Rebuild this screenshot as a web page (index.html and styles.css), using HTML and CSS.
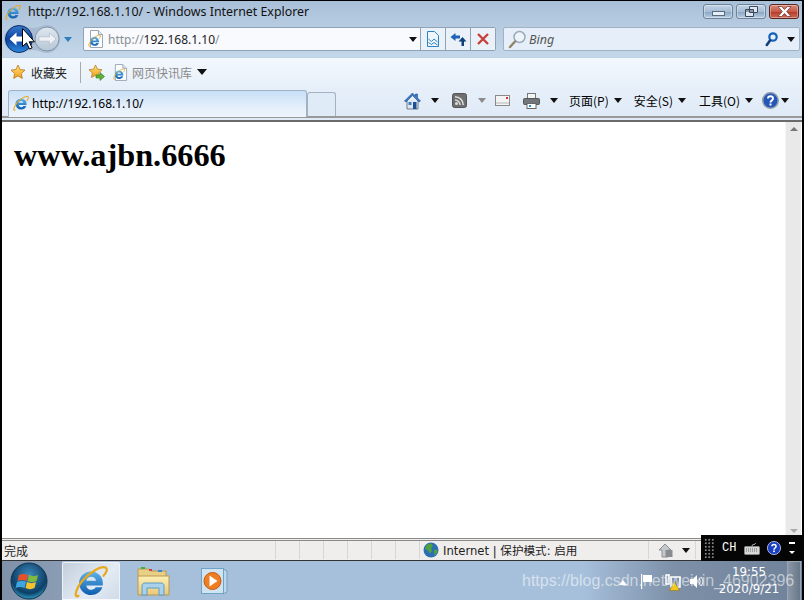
FILE: index.html
```html
<!DOCTYPE html>
<html lang="zh">
<head>
<meta charset="utf-8">
<title>http://192.168.1.10/ - Windows Internet Explorer</title>
<link rel="stylesheet" href="styles.css">
</head>
<body>
<svg class="defs" aria-hidden="true">
  <defs>
    <linearGradient id="gblue" x1="0" y1="0" x2="0" y2="1"><stop offset="0" stop-color="#5fb4ea"/><stop offset="1" stop-color="#0f5cae"/></linearGradient>
    <linearGradient id="ggold" x1="0" y1="0" x2="0" y2="1"><stop offset="0" stop-color="#ffe27a"/><stop offset="1" stop-color="#ef9d1a"/></linearGradient>
    <linearGradient id="gback" x1="0" y1="0" x2="0" y2="1"><stop offset="0" stop-color="#3a7ccc"/><stop offset=".5" stop-color="#0c3f9c"/><stop offset="1" stop-color="#2d8be0"/></linearGradient>
    <linearGradient id="gfwd" x1="0" y1="0" x2="0" y2="1"><stop offset="0" stop-color="#dfe7ef"/><stop offset="1" stop-color="#b7c6d6"/></linearGradient>
    <linearGradient id="gfolder" x1="0" y1="0" x2="0" y2="1"><stop offset="0" stop-color="#fdf0b4"/><stop offset="1" stop-color="#e8c878"/></linearGradient>
    <radialGradient id="gorb" cx=".5" cy=".35" r=".7"><stop offset="0" stop-color="#3f8cc0"/><stop offset=".7" stop-color="#0d3f66"/><stop offset="1" stop-color="#39b6dc"/></radialGradient>
    <symbol id="ie" viewBox="1 0 22 23">
      <path fill="url(#gblue)" fill-rule="evenodd" d="M4 13a8 8 0 0 1 16 0v1.500H8.800c.3 1.900 1.700 3 3.400 3 1.400 0 2.500-.6 3-1.700h4.500C18.600 19 15.700 21 12.200 21A8.100 8.100 0 0 1 4 13zM8.800 11.300h6.600c-.3-1.600-1.600-2.600-3.300-2.600s-3 1-3.300 2.600z"/>
      <path fill="none" stroke="#e8a91c" stroke-width="1.500" stroke-linecap="round" d="M3.500 21.500C.5 23.500 1 18 6 11.500 11 5.500 19 1 22 2.500c1.700 1-.2 4-1.500 5.500"/>
    </symbol>
    <symbol id="star" viewBox="0 0 16 16">
      <path fill="url(#ggold)" stroke="#b9791a" stroke-width=".8" d="M8 1l2.100 4.500 4.900.6-3.600 3.400.9 4.900L8 11.900l-4.300 2.500.9-4.900L1 6.100l4.900-.6z"/>
    </symbol>
    <symbol id="page" viewBox="0 0 16 18">
      <path fill="#fbfdff" stroke="#9aa7b5" d="M2.500.5h8l4 4v13h-12z"/>
      <path fill="#dfe6ee" stroke="#9aa7b5" d="M10.500.5v4h4"/>
      <use href="#ie" x="0" y="4" width="13" height="13"/>
    </symbol>
  </defs>
</svg>

<div class="window">
  <header class="titlebar">
    <svg class="ico-16"><use href="#ie"/></svg>
    <span class="title-text">http://192.168.1.10/ - Windows Internet Explorer</span>
    <div class="winbtns">
      <button class="winbtn"><span class="min-glyph"></span></button>
      <button class="winbtn">
        <svg width="13" height="11" viewBox="0 0 13 11"><path fill="#dfe8f2" stroke="#3a4a5c" d="M4.500.5h8v6h-8zM.5 3.500h8v7h-8z"/><path fill="none" stroke="#3a4a5c" d="M1 5h7"/></svg>
      </button>
      <button class="winbtn winbtn-close">
        <svg width="15" height="11" viewBox="0 0 15 11"><path fill="#fff" stroke="#6b2a22" stroke-width=".7" d="M1 .5h3.600l2.900 3 2.900-3H14L9.700 5.500 14 10.500h-3.600l-2.900-3-2.900 3H1l4.300-5z"/></svg>
      </button>
    </div>
  </header>

  <nav class="navbar">
    <div class="navcluster">
      <svg class="nav-svg" width="62" height="32" viewBox="0 0 62 32">
        <path fill="#9fb4c9" opacity=".7" d="M17 2c6 0 9 3 13 3h2c4 0 8-3 13-3 7 0 13 6 13 14s-6 14-13 14c-5 0-9-3-13-3h-2c-4 0-8 3-13 3C9 30 2 24 2 16S9 2 17 2z"/>
        <circle cx="17" cy="16" r="13.500" fill="url(#gback)" stroke="#0f2f6a"/>
        <path fill="#fff" d="M7.500 16l7-6.500v4h8v5h-8v4z"/>
        <circle cx="45" cy="16" r="12" fill="url(#gfwd)" stroke="#7f93a8"/>
        <path fill="#eef2f6" stroke="#a6b4c2" stroke-width=".6" d="M54 16l-6.500-6v3.800H37v4.400h10.500V22z"/>
        <path fill="#fff" stroke="#000" d="M20.500 5.500v18l4-3.700 3 6.200 2.600-1.200-2.900-6h5.300z"/>
      </svg>
      <span class="tri tri-blue"></span>
    </div>
    <div class="addr">
      <svg class="addr-page" width="16" height="18"><use href="#page"/></svg>
      <span class="addr-text"><span class="dim">http://</span>192.168.1.10<span class="dim">/</span></span>
      <span class="tri tri-dark addr-drop"></span>
      <span class="addr-btn">
        <svg width="14" height="16" viewBox="0 0 14 16"><path fill="#eef6fc" stroke="#2a83c4" d="M1.500.5h7l4 4v11h-11z"/><path fill="none" stroke="#2a83c4" d="M2.500 8l3 2.500 2.500-2.500 3.500 3M2.500 11.500l3 2 2.500-2 3.500 2.500"/></svg>
      </span>
      <span class="addr-btn">
        <svg width="17" height="15" viewBox="0 0 17 15"><path fill="#1f63b5" d="M5.500 1v2.500H10v3H5.500V9L.5 5z"/><path fill="#123f7a" d="M11.500 14v-4.500H8.500L12.500 5l4 4.500h-2.500V14z"/></svg>
      </span>
      <span class="addr-btn">
        <svg width="12" height="12" viewBox="0 0 12 12"><path fill="none" stroke="#c6423a" stroke-width="2.400" d="M1 1l10 10M11 1L1 11"/></svg>
      </span>
    </div>
    <div class="search">
      <svg width="19" height="19" viewBox="0 0 19 19"><circle cx="11.500" cy="7" r="5.500" fill="#eef4fa" stroke="#9aa9b8" stroke-width="1.500"/><path stroke="#8e8468" stroke-width="2.400" stroke-linecap="round" d="M7 11.500L2 17"/></svg>
      <span class="search-text">Bing</span>
      <svg class="search-go" width="13" height="15" viewBox="0 0 13 15"><circle cx="8" cy="5" r="3.700" fill="none" stroke="#1560b8" stroke-width="2.200"/><path stroke="#123f7a" stroke-width="2.600" stroke-linecap="round" d="M5 8.500L1.800 13"/></svg>
      <span class="tri tri-dark search-drop"></span>
    </div>
  </nav>

  <section class="chrome">
    <div class="favbar">
      <svg class="fav-star" width="16" height="16"><use href="#star"/></svg>
      <span class="fav-label">收藏夹</span>
      <span class="fav-sep"></span>
      <svg width="17" height="17" viewBox="0 0 17 17"><use href="#star" width="15" height="15"/><path fill="#5fb33a" stroke="#2f7a1c" stroke-width=".6" d="M8 11h4V8.500l4.500 4-4.500 4V14H8z"/></svg>
      <svg class="fav-page" width="15" height="17"><use href="#page"/></svg>
      <span class="fav-gray">网页快讯库</span>
      <span class="tri tri-dark tri-lg"></span>
    </div>
    <div class="tabrow">
      <div class="tab tab-active">
        <svg class="ico-16"><use href="#ie"/></svg>
        <span class="tab-text">http://192.168.1.10/</span>
      </div>
      <div class="tab tab-new"></div>
      <div class="commands">
        <svg class="cmd-home" width="17" height="18" viewBox="0 0 17 18"><path fill="#dfe7ef" stroke="#6d7d8c" d="M3 8v9h11V8"/><rect x="9" y="10" width="3.500" height="7" fill="#1d4f99"/><rect x="4.500" y="10" width="3" height="3" fill="#3b7cc4"/><path fill="#3b78c0" stroke="#1d4f99" stroke-width=".6" d="M8.500 1L.5 9l1.500 1 6.500-6.500L15 10l1.500-1-3-3V2h-2v2z"/></svg>
        <span class="tri tri-dark cmd-arrow-a"></span>
        <svg class="cmd-rss" width="15" height="15" viewBox="0 0 15 15"><rect x=".5" y=".5" width="14" height="14" rx="2" fill="#6e6e6e" stroke="#555"/><circle cx="4.500" cy="10.500" r="1.500" fill="#ddd"/><path fill="none" stroke="#ddd" stroke-width="1.500" d="M3 7a5 5 0 0 1 5 5M3 3.700A8.300 8.300 0 0 1 11.300 12"/></svg>
        <span class="tri tri-gray cmd-arrow-b"></span>
        <svg class="cmd-mail" width="15" height="11" viewBox="0 0 15 11"><rect x=".5" y=".5" width="14" height="10" fill="#f3f3f3" stroke="#8a8a8a"/><path fill="none" stroke="#b5b5b5" d="M1 8h13"/><rect x="11" y="2" width="2" height="2" fill="#c33"/></svg>
        <svg class="cmd-print" width="17" height="16" viewBox="0 0 17 16"><rect x="4.500" y=".5" width="8" height="5" fill="#f4f4f4" stroke="#777"/><rect x=".5" y="5.500" width="16" height="6" rx="1" fill="#70767c" stroke="#555"/><rect x="4" y="10.500" width="9" height="5" fill="#fff" stroke="#666"/><rect x="6" y="12" width="2" height="2" fill="#2a8fd0"/></svg>
        <span class="tri tri-dark cmd-arrow-c"></span>
        <span class="cmd-text cmd-page">页面(P)</span><span class="tri tri-dark"></span>
        <span class="cmd-text cmd-safe">安全(S)</span><span class="tri tri-dark"></span>
        <span class="cmd-text cmd-tool">工具(O)</span><span class="tri tri-dark"></span>
        <svg class="cmd-help" width="17" height="17" viewBox="0 0 17 17"><circle cx="8.500" cy="8.500" r="7.700" fill="#2456b8" stroke="#8d99a8" stroke-width="1.500"/><path fill="none" stroke="#fff" stroke-width="1.900" d="M6 6.500c0-3 5-3 5 0 0 2-2.500 2-2.500 4"/><rect x="7.500" y="11.500" width="2" height="2" fill="#fff"/></svg>
        <span class="tri tri-dark"></span>
      </div>
    </div>
  </section>

  <main class="viewport">
    <div class="page"><h1 class="headline">www.ajbn.6666</h1></div>
    <div class="scrollbar">
      <span class="sb-up"></span>
      <span class="sb-down"></span>
    </div>
  </main>

  <footer class="statusbar">
    <span class="st-done">完成</span>
    <span class="st-cell"></span><span class="st-cell"></span><span class="st-cell"></span><span class="st-cell"></span><span class="st-cell"></span><span class="st-cell"></span>
    <span class="st-zone">
      <svg width="16" height="16" viewBox="0 0 16 16"><circle cx="8" cy="8" r="7.500" fill="#2c6fb5"/><path fill="#4fa53a" d="M4 2.500l4-1 2 2-2 3 1 2-2 3-2-3-3-2zM11 8l3-.5.500 3-3 3z"/></svg>
      <span class="st-zone-text">Internet | 保护模式: 启用</span>
    </span>
    <span class="st-zoom">
      <svg width="16" height="15" viewBox="0 0 16 15"><path fill="#c4c8cc" stroke="#8c9095" d="M1 7l6-6 6 6-3 0v7H4V7z"/><rect x="7.500" y="7" width="7" height="7" fill="#8a8d90"/></svg>
      <span class="tri tri-dark st-zoom-tri"></span>
    </span>
  </footer>

  <footer class="taskbar">
    <div class="start">
      <svg width="38" height="38" viewBox="0 0 38 38"><circle cx="19" cy="19" r="18" fill="url(#gorb)" stroke="#11334f"/><path fill="#e8502a" d="M9 13c3-1.500 6-1.500 9 0l-1.500 6c-3-1.500-6-1.500-9 0z"/><path fill="#7fbb3a" d="M19 13c3 1.500 6 1.500 9 0l-1.500 6c-3 1.500-6 1.500-9 0z"/><path fill="#3fa5e0" d="M7 20c3-1.500 6-1.500 9 0l-1.500 6c-3-1.500-6-1.500-9 0z"/><path fill="#f5c42c" d="M17 20c3 1.500 6 1.500 9 0l-1.500 6c-3 1.500-6 1.500-9 0z"/></svg>
    </div>
    <div class="task task-active"><svg width="34" height="34"><use href="#ie"/></svg></div>
    <div class="task task-folder">
      <svg width="33" height="30" viewBox="0 0 33 30"><path fill="#e8cf86" stroke="#b89a50" d="M1 3h11l2 2h15v6H1z"/><rect x="4" y="1" width="4" height="2" fill="#3db03d"/><rect x="12" y="3" width="3" height="2" fill="#d04040"/><rect x="21" y="4" width="4" height="2" fill="#3b85d0"/><path fill="url(#gfolder)" stroke="#b89a50" d="M1 10h31v19H1z"/><path fill="#a9d2ea" stroke="#5f9cc4" d="M5 29V20c0-2 1-3 3-3h16c2 0 3 1 3 3v9h-5v-7H10v7z"/></svg>
    </div>
    <div class="task task-media">
      <svg width="27" height="28" viewBox="0 0 27 28"><path fill="#bcd9ec" stroke="#6fa3c6" d="M22 2l4 2v21l-4 2z"/><rect x=".5" y="1.500" width="22" height="25" fill="#cfe3f1" stroke="#6fa3c6"/><circle cx="11.500" cy="14" r="8.500" fill="#ef7d22" stroke="#c9590e"/><path fill="#fff" d="M8.500 8.500l8 5.500-8 5.500z"/></svg>
    </div>
    <div class="tray">
      <span class="tray-up"></span>
      <svg class="tray-flag" width="13" height="15" viewBox="0 0 13 15"><path fill="#fff" d="M1 0h1.200v15H1zM3 1h9v7H3z"/></svg>
      <svg class="tray-net" width="16" height="17" viewBox="0 0 16 17"><path fill="none" stroke="#fff" stroke-width="1.500" d="M1 1h3v9H1zM6 3h9v10H6z"/><path fill="#f2c81e" stroke="#8a6a00" stroke-width=".5" d="M9.500 8l5 8.500h-10z"/></svg>
      <svg class="tray-vol" width="14" height="15" viewBox="0 0 14 15"><path fill="#fff" d="M0 5h3l4-4v13l-4-4H0z"/><path fill="none" stroke="#fff" d="M9 4.500c1.500 2 1.500 4 0 6M11 3c2.500 3 2.500 6 0 9"/></svg>
      <span class="clock"><span>19:55</span><span>2020/9/21</span></span>
      <span class="showdesk"></span>
    </div>
  </footer>

  <div class="langbar">
    <span class="lang-grip"></span>
    <span class="lang-ch">CH</span>
    <svg width="16" height="13" viewBox="0 0 16 13"><path fill="none" stroke="#bbb" d="M8 4c0-2 2-1 3-2s1-1 1-1"/><rect x=".5" y="4.500" width="15" height="8" rx="1" fill="#d8d8d8" stroke="#888"/><path stroke="#666" stroke-dasharray="1 1" d="M2 7h12M2 9h12"/></svg>
    <svg width="14" height="14" viewBox="0 0 17 17"><circle cx="8.500" cy="8.500" r="8" fill="#1a3fc0" stroke="#c6d0ea"/><path fill="none" stroke="#fff" stroke-width="1.900" d="M6 6.500c0-3 5-3 5 0 0 2-2.500 2-2.500 4"/><rect x="7.500" y="11.500" width="2" height="2" fill="#fff"/></svg>
    <span class="lang-menu"><span class="lang-dash"></span><span class="lang-tri"></span></span>
  </div>

  <div class="watermark">https://blog.csdn.net/weixin_46902396</div>
</div>
</body>
</html>
```

FILE: styles.css
```css
* { box-sizing: border-box; }
html, body { margin: 0; padding: 0; background: #000; }
body { width: 804px; height: 600px; overflow: hidden; font-family: "DejaVu Sans", "Noto Sans CJK SC", sans-serif; font-size: 11px; color: #000; }
.defs { position: absolute; width: 0; height: 0; }
.ico-16 { width: 16px; height: 16px; flex: none; }
button { padding: 0; font: inherit; }

.window { position: relative; width: 804px; height: 600px; display: flex; flex-direction: column; padding: 1px 2px 0 2px; }

.titlebar { height: 24px; flex: none; display: flex; align-items: center; padding: 0 3px 3px 3px; background: linear-gradient(#a9c0d9, #b6cbe0); }
.title-text { margin-left: 7px; font-family: "Noto Sans", "Noto Sans CJK SC", sans-serif; font-size: 12.4px; color: #111; white-space: nowrap; }
.winbtns { margin-left: auto; display: flex; gap: 3px; }
.winbtn { width: 30px; height: 15px; display: flex; align-items: center; justify-content: center; border: 1px solid #6f8298; border-radius: 3px; background: linear-gradient(#c3d4e6 0, #a7bdd5 50%, #8ba7c4 55%, #b9cde1 100%); box-shadow: inset 0 0 0 1px rgba(255,255,255,.35); }
.min-glyph { display: block; width: 13px; height: 5px; background: #e8eef5; border: 1px solid #5a6c80; margin-top: 3px; }
.winbtn-close { border-color: #5a2620; background: linear-gradient(#d98a7c 0, #c65a48 50%, #b63c2a 55%, #cf6a55 100%); }

.navbar { height: 33px; flex: none; display: flex; align-items: center; padding: 0 2px 4px 0; background: linear-gradient(#b6cbe0, #c4d7ea); border-bottom: 1px solid #bccfe3; }
.navcluster { display: flex; align-items: center; width: 81px; flex: none; }
.nav-svg { flex: none; }
.navcluster .tri-blue { margin-left: 0; }
.addr { width: 413px; height: 24px; flex: none; display: flex; align-items: center; background: #f8fafd; border: 1px solid #8fa3b8; border-radius: 2px; padding-left: 4px; }
.addr-page { flex: none; }
.addr-text { margin-left: 4px; font-family: "Noto Sans", sans-serif; font-size: 12px; white-space: nowrap; color: #222; }
.dim { color: #8a8f96; }
.addr-drop { margin-left: auto; margin-right: 3px; }
.addr-btn { width: 25px; height: 100%; flex: none; display: flex; align-items: center; justify-content: center; border-left: 1px solid #8fa3b8; background: #eaf1f9; }
.search { width: 297px; height: 24px; flex: none; margin-left: 7px; display: flex; align-items: center; padding-left: 4px; background: #e6eff9; border: 1px solid #9fb2c6; border-radius: 2px; }
.search-text { margin-left: 2px; font-family: "Noto Sans", sans-serif; font-style: italic; font-size: 12.5px; color: #555; }
.search-go { margin-left: auto; }
.search-drop { margin: 0 4px 0 9px; }

.tri { display: inline-block; width: 0; height: 0; flex: none; border-style: solid; border-width: 5px 4.5px 0; border-color: #111 transparent transparent; }
.tri-blue { border-top-color: #2f7fc0; }
.tri-gray { border-top-color: #8c8c8c; }
.tri-lg { border-width: 6px 5px 0; }

.chrome { flex: none; padding-bottom: 2px; background: linear-gradient(#f3f8fd 0, #e6eff9 50%, #dfeaf7 100%); }
.favbar { height: 31px; display: flex; align-items: center; padding: 0 0 3px 8px; }
.fav-label { margin-left: 5px; font-size: 12px; color: #222; font-family: "Noto Sans CJK SC", sans-serif; }
.fav-sep { width: 1px; height: 21px; background: #a9a9a9; margin: 0 7px 0 13px; }
.fav-page { margin-left: 8px; }
.fav-gray { margin-left: 4px; font-size: 12px; color: #8a8a8a; font-family: "Noto Sans CJK SC", sans-serif; }
.favbar .tri-lg { margin-left: 5px; }

.tabrow { height: 29px; display: flex; align-items: flex-end; padding-left: 6px; border-bottom: 2px solid #999; }
.tab { border: 1px solid #a3b2c3; border-bottom: none; border-radius: 3px 3px 0 0; }
.tab-active { width: 299px; height: 27px; margin-bottom: -1px; display: flex; align-items: center; padding: 0 0 2px 4px; background: linear-gradient(#c7dff7, #e4effb 60%, #eef4fb); }
.tab-text { margin-left: 3px; font-family: "Noto Sans", sans-serif; font-size: 12px; }
.tab-new { width: 29px; height: 24px; background: #e0ebf8; }
.commands { flex: 1; height: 27px; display: flex; align-items: center; padding-bottom: 4px; font-family: "Noto Sans CJK SC", sans-serif; }
.cmd-home { margin-left: 68px; flex: none; }
.cmd-arrow-a { margin-left: 10px; }
.cmd-rss { margin-left: 13px; flex: none; }
.cmd-arrow-b { margin-left: 11px; }
.cmd-mail { margin-left: 9px; flex: none; }
.cmd-print { margin-left: 13px; flex: none; }
.cmd-arrow-c { margin-left: 10px; }
.cmd-text { font-size: 12px; white-space: nowrap; margin-right: 5px; }
.cmd-page { margin-left: 11px; }
.cmd-safe { margin-left: 12px; }
.cmd-tool { margin-left: 13px; }
.cmd-help { margin-left: 9px; margin-right: 2px; flex: none; }

.viewport { flex: 1; min-height: 0; display: flex; background: #fff; border-top: 2px solid #6b6b6b; padding-right: 1px; padding-left: 1px; }
.page { flex: 1; min-width: 0; padding-left: 11px; }
.headline { margin: 0; padding-top: 15px; font-family: "Liberation Serif", serif; font-weight: 700; font-size: 32.3px; line-height: 37px; color: #000; }
.scrollbar { width: 16px; flex: none; display: flex; flex-direction: column; align-items: center; justify-content: space-between; padding: 5px 0; background: #e9e9e9; border-left: 1px solid #f6f6f6; }
.sb-up { width: 0; height: 0; border-style: solid; border-width: 0 4px 4px; border-color: transparent transparent #777; }
.sb-down { width: 0; height: 0; border-style: solid; border-width: 4px 4px 0; border-color: #aaa transparent transparent; }

.statusbar { height: 23px; flex: none; display: flex; align-items: center; padding-bottom: 1px; background: #f0eded; border-top: 3px double #8a8a8a; border-bottom: 1px solid #333; font-family: "Noto Sans CJK SC", sans-serif; font-size: 12px; color: #222; }
.st-done { margin-left: 2px; width: 271px; flex: none; }
.st-cell { width: 24px; height: 100%; flex: none; border-left: 1px solid #d9d6d6; }
.st-zone { width: 229px; height: 100%; flex: none; display: flex; align-items: center; padding-left: 3px; border-left: 1px solid #d9d6d6; }
.st-zone-text { margin-left: 4px; font-family: "DejaVu Sans", "Noto Sans CJK SC", sans-serif; font-size: 11.6px; white-space: nowrap; }
.st-zoom { width: 48px; height: 100%; flex: none; display: flex; align-items: center; padding-left: 9px; border-left: 1px solid #d9d6d6; border-right: 1px solid #d9d6d6; }
.st-zoom-tri { margin-left: 8px; }

.taskbar { height: 39px; flex: none; display: flex; align-items: stretch; background: #a6bfdb; }
.start { width: 60px; flex: none; display: flex; align-items: center; justify-content: center; background: linear-gradient(90deg, #7f91a8, #8a9db4); padding-right: 6px; }
.task { flex: none; display: flex; align-items: center; justify-content: center; }
.task-active { width: 58px; background: linear-gradient(135deg, #c4cfdc, #e3ebf4 60%, #cfdbe8); border: 1px solid #eef3f8; border-bottom-color: #f6f8fb; border-radius: 2px 2px 0 0; margin-top: 1px; }
.task-folder { width: 66px; }
.task-media { width: 56px; }
.tray { flex: 1; position: relative; display: flex; align-items: center; background: linear-gradient(90deg, #a6bfdb 0, #a6bfdb 61%, #7d90a8 77%, #6f8299 100%); color: #fff; }
.tray-up { position: absolute; left: 377px; top: 19px; width: 0; height: 0; border-style: solid; border-width: 0 4px 5px; border-color: transparent transparent #fff; }
.tray-flag { position: absolute; left: 398px; top: 13px; }
.tray-net { position: absolute; left: 423px; top: 13px; }
.tray-vol { position: absolute; left: 448px; top: 13px; }
.clock { position: absolute; left: 470px; top: 3px; width: 74px; display: flex; flex-direction: column; align-items: center; font-family: "DejaVu Sans", sans-serif; font-size: 11.8px; line-height: 17px; }
.showdesk { position: absolute; left: 545px; top: 0; bottom: 0; width: 14px; background: linear-gradient(90deg, #8a97a6, #68778a); border: 1px solid #9aa6b3; border-bottom: 0; }

.langbar { position: absolute; left: 701px; top: 535px; width: 103px; height: 26px; display: flex; align-items: center; background: #050505; color: #fff; }
.lang-grip { width: 10px; height: 20px; margin-left: 3px; background-image: radial-gradient(#888 35%, transparent 40%); background-size: 3.500px 3.500px; }
.lang-ch { margin: 0 8px; font-family: "Liberation Mono", monospace; font-size: 12px; width: 14px; }
.langbar svg:nth-of-type(1) { margin-right: 7px; }
.lang-menu { margin-left: 8px; display: flex; flex-direction: column; align-items: center; gap: 7px; }
.lang-dash { width: 6px; height: 2px; background: #fff; }
.lang-tri { width: 0; height: 0; border-style: solid; border-width: 3px 3px 0; border-color: #fff transparent transparent; }

.watermark { position: absolute; left: 522px; top: 572px; font-family: "Liberation Sans", sans-serif; font-size: 16px; color: rgba(255,255,255,.55); white-space: nowrap; pointer-events: none; }
```
